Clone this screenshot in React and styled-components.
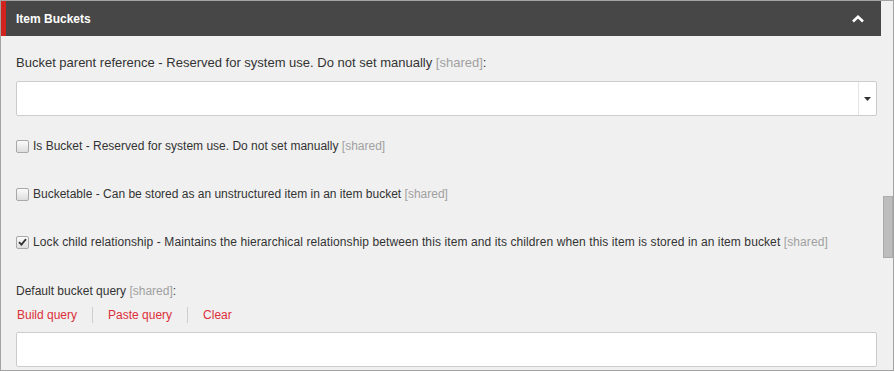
import React from 'react';
import styled, { createGlobalStyle } from 'styled-components';

const GlobalStyle = createGlobalStyle`
  html, body {
    margin: 0;
    padding: 0;
    background: #ffffff;
  }
  * {
    box-sizing: border-box;
  }
`;

const Frame = styled.div`
  width: 894px;
  height: 371px;
  border: 1px solid #a3a3a3;
  display: flex;
  overflow: hidden;
  font-family: "Liberation Sans", Arial, sans-serif;
  font-size: 12px;
  color: #333333;
  background: #f0f0f0;
`;

const Panel = styled.div`
  width: 881px;
  display: flex;
  flex-direction: column;
`;

const Header = styled.div`
  height: 35px;
  background: #474747;
  border-left: 5px solid #d0231e;
  display: flex;
  align-items: center;
  justify-content: space-between;
  padding: 0 17px 0 10px;
  color: #ffffff;
`;

const Title = styled.h3`
  margin: 0;
  font-size: 12px;
  font-weight: bold;
  line-height: 16px;
`;

const Body = styled.div`
  padding: 19px 4px 0 15px;
  display: flex;
  flex-direction: column;
`;

const FieldLabel = styled.div`
  line-height: 16px;
  font-size: ${(p) => p.$size || 12}px;
  margin-top: ${(p) => p.$top || 0}px;
`;

const Shared = styled.span`
  color: #a0a0a0;
`;

const SelectBox = styled.div`
  margin-top: 10px;
  height: 35px;
  background: #ffffff;
  border: 1px solid #cccccc;
  border-radius: 2px;
  display: flex;
  justify-content: flex-end;
`;

const SelectArrow = styled.div`
  width: 18px;
  border-left: 1px solid #e4e4e4;
  display: flex;
  align-items: center;
  justify-content: center;
`;

const CheckRow = styled.label`
  display: flex;
  align-items: center;
  gap: 4px;
  line-height: 16px;
  margin-top: ${(p) => p.$top}px;
  color: #333333;
  letter-spacing: ${(p) => (p.$wide ? '0.1px' : 'normal')};
`;

const Box = styled.span`
  width: 13px;
  height: 13px;
  border: 1px solid #a8a8a8;
  border-radius: 2px;
  background: linear-gradient(#fafafa, #dedede);
  display: flex;
  align-items: center;
  justify-content: center;
`;

const Links = styled.div`
  display: flex;
  align-items: center;
  margin-top: 8px;
  line-height: 16px;
`;

const QueryLink = styled.a`
  color: #dc2f3a;
  cursor: pointer;
  padding: 0 15px;
  border-left: 1px solid #cfcfcf;
  &:first-child {
    padding-left: 1px;
    border-left: none;
  }
`;

const QueryInput = styled.div`
  margin-top: 9px;
  height: 35px;
  background: #ffffff;
  border: 1px solid #cccccc;
  border-radius: 2px;
`;

const ScrollTrack = styled.div`
  flex: 1;
  background: #f0f0f0;
  padding-top: 195px;
  padding-left: 2px;
`;

const ScrollThumb = styled.div`
  width: 10px;
  height: 62px;
  background: #bdbdbd;
  border: 1px solid #ababab;
`;

const Check = ({ checked }) => (
  <Box>
    {checked && (
      <svg width="9" height="8" viewBox="0 0 9 8">
        <path d="M1 4.2 L3.4 6.6 L8 1.2" fill="none" stroke="#333" strokeWidth="1.8" />
      </svg>
    )}
  </Box>
);

const rows = [
  { text: 'Is Bucket - Reserved for system use. Do not set manually', top: 22 },
  { text: 'Bucketable - Can be stored as an unstructured item in an item bucket', top: 32 },
  {
    text: 'Lock child relationship - Maintains the hierarchical relationship between this item and its children when this item is stored in an item bucket',
    top: 32,
    checked: true,
    wide: true,
  },
];

export default function App() {
  return (
    <>
      <GlobalStyle />
      <Frame>
        <Panel>
          <Header>
            <Title>Item Buckets</Title>
            <svg width="12" height="8" viewBox="0 0 12 8">
              <path d="M1 6.5 L6 1.8 L11 6.5" fill="none" stroke="#fff" strokeWidth="2.6" />
            </svg>
          </Header>
          <Body>
            <FieldLabel $size={13}>
              Bucket parent reference - Reserved for system use. Do not set manually <Shared>[shared]</Shared>:
            </FieldLabel>
            <SelectBox>
              <SelectArrow>
                <svg width="7" height="4" viewBox="0 0 7 4">
                  <path d="M0 0 H7 L3.5 4 Z" fill="#333" />
                </svg>
              </SelectArrow>
            </SelectBox>
            {rows.map((r) => (
              <CheckRow key={r.text} $top={r.top} $wide={r.wide}>
                <Check checked={r.checked} />
                <span>
                  {r.text} <Shared>[shared]</Shared>
                </span>
              </CheckRow>
            ))}
            <FieldLabel $top={33}>
              Default bucket query <Shared>[shared]</Shared>:
            </FieldLabel>
            <Links>
              <QueryLink>Build query</QueryLink>
              <QueryLink>Paste query</QueryLink>
              <QueryLink>Clear</QueryLink>
            </Links>
            <QueryInput />
          </Body>
        </Panel>
        <ScrollTrack>
          <ScrollThumb />
        </ScrollTrack>
      </Frame>
    </>
  );
}
